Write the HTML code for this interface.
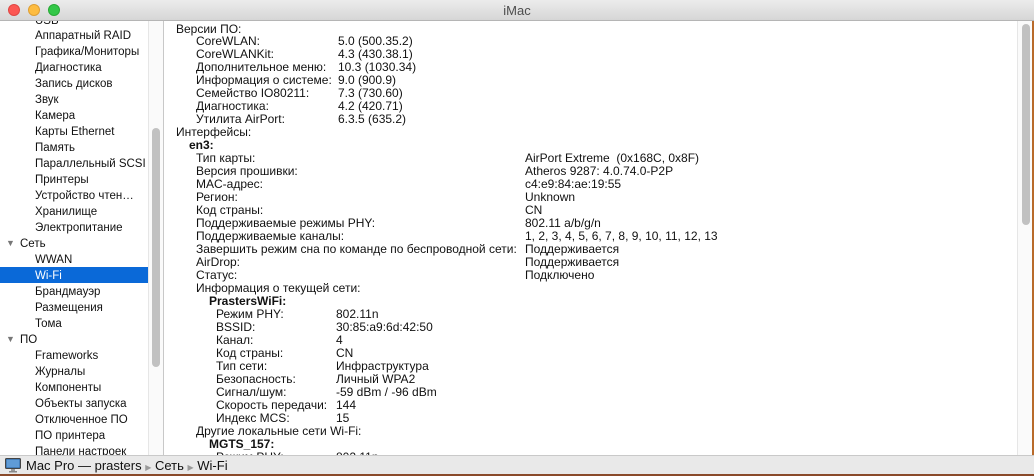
<!DOCTYPE html>
<html><head><meta charset="utf-8"><style>
*{margin:0;padding:0;box-sizing:border-box}
body{width:1034px;height:476px;overflow:hidden;background:#fff;font-family:"Liberation Sans","DejaVu Sans",sans-serif;font-size:12px;color:#111;position:relative}
.c{position:absolute;left:0;top:1px;width:1034px;height:454px;overflow:hidden}
.t{position:absolute;white-space:nowrap;line-height:13px}
.b{font-weight:bold}
#title{position:absolute;left:0;top:0;width:1034px;height:21px;background:linear-gradient(#ececec,#d6d6d6);border-bottom:1px solid #b5b5b5;z-index:2}
.dot{position:absolute;top:4px;width:12px;height:12px;border-radius:50%}
#side{position:absolute;left:0;top:21px;width:164px;height:434px;background:#fff;border-right:1px solid #c8c8c8;overflow:hidden}
.s{position:absolute;left:35px;white-space:nowrap;font-size:11.5px;line-height:16px;height:16px;top:1px}
.h{left:20px}
.tri{position:absolute;left:6px;font-size:9px;color:#777;line-height:16px}
#bot{position:absolute;left:0;top:455px;width:1034px;height:19px;background:#e9e9e9;border-top:1px solid #c9c9c9;z-index:2}
</style></head><body>
<div id="title">
<div class="dot" style="left:8px;background:#fc5753;border:1px solid #df4744"></div>
<div class="dot" style="left:28px;background:#fdbc40;border:1px solid #de9f34"></div>
<div class="dot" style="left:48px;background:#33c748;border:1px solid #27aa35"></div>
<div style="position:absolute;left:0;width:1034px;top:3px;text-align:center;font-size:13px;color:#4d4d4d">iMac</div>
</div>
<div id="side">
<div class="s" style="top:-8px">USB</div>
<div class="s" style="top:7px">Аппаратный RAID</div>
<div class="s" style="top:23px">Графика/Мониторы</div>
<div class="s" style="top:39px">Диагностика</div>
<div class="s" style="top:55px">Запись дисков</div>
<div class="s" style="top:71px">Звук</div>
<div class="s" style="top:87px">Камера</div>
<div class="s" style="top:103px">Карты Ethernet</div>
<div class="s" style="top:119px">Память</div>
<div class="s" style="top:135px">Параллельный SCSI</div>
<div class="s" style="top:151px">Принтеры</div>
<div class="s" style="top:167px">Устройство чтен…</div>
<div class="s" style="top:183px">Хранилище</div>
<div class="s" style="top:199px">Электропитание</div>
<div class="tri" style="top:214px">▼</div><div class="s h" style="top:215px">Сеть</div>
<div class="s" style="top:231px">WWAN</div>
<div style="position:absolute;left:0;top:246px;width:148px;height:16px;background:#0a69d8"></div>
<div class="s" style="top:247px;color:#fff">Wi-Fi</div>
<div class="s" style="top:263px">Брандмауэр</div>
<div class="s" style="top:279px">Размещения</div>
<div class="s" style="top:295px">Тома</div>
<div class="tri" style="top:310px">▼</div><div class="s h" style="top:311px">ПО</div>
<div class="s" style="top:327px">Frameworks</div>
<div class="s" style="top:343px">Журналы</div>
<div class="s" style="top:359px">Компоненты</div>
<div class="s" style="top:375px">Объекты запуска</div>
<div class="s" style="top:391px">Отключенное ПО</div>
<div class="s" style="top:407px">ПО принтера</div>
<div class="s" style="top:423px">Панели настроек</div>
<div style="position:absolute;left:148px;top:0;width:16px;height:434px;background:#fafafa;border-left:1px solid #e6e6e6"></div>
<div style="position:absolute;left:152px;top:107px;width:8px;height:239px;border-radius:4px;background:#c1c1c1"></div>
</div>
<div style="position:absolute;left:1017px;top:21px;width:15px;height:434px;background:#fafafa;border-left:1px solid #e6e6e6"></div>
<div style="position:absolute;left:1022px;top:24px;width:8px;height:201px;border-radius:4px;background:#c1c1c1"></div>
<div style="position:absolute;left:1032px;top:0;width:2px;height:476px;background:#b86a2a"></div>

<div class="c">
<div class="t" style="left:176px;top:22px">Версии ПО:</div>
<div class="t" style="left:196px;top:34px">CoreWLAN:</div><div class="t" style="left:338px;top:34px">5.0 (500.35.2)</div>
<div class="t" style="left:196px;top:47px">CoreWLANKit:</div><div class="t" style="left:338px;top:47px">4.3 (430.38.1)</div>
<div class="t" style="left:196px;top:60px">Дополнительное меню:</div><div class="t" style="left:338px;top:60px">10.3 (1030.34)</div>
<div class="t" style="left:196px;top:73px">Информация о системе:</div><div class="t" style="left:338px;top:73px">9.0 (900.9)</div>
<div class="t" style="left:196px;top:86px">Семейство IO80211:</div><div class="t" style="left:338px;top:86px">7.3 (730.60)</div>
<div class="t" style="left:196px;top:99px">Диагностика:</div><div class="t" style="left:338px;top:99px">4.2 (420.71)</div>
<div class="t" style="left:196px;top:112px">Утилита AirPort:</div><div class="t" style="left:338px;top:112px">6.3.5 (635.2)</div>
<div class="t" style="left:176px;top:125px">Интерфейсы:</div>
<div class="t b" style="left:189px;top:138px">en3:</div>
<div class="t" style="left:196px;top:151px">Тип карты:</div><div class="t" style="left:525px;top:151px">AirPort Extreme&nbsp; (0x168C, 0x8F)</div>
<div class="t" style="left:196px;top:164px">Версия прошивки:</div><div class="t" style="left:525px;top:164px">Atheros 9287: 4.0.74.0-P2P</div>
<div class="t" style="left:196px;top:177px">MAC-адрес:</div><div class="t" style="left:525px;top:177px">c4:e9:84:ae:19:55</div>
<div class="t" style="left:196px;top:190px">Регион:</div><div class="t" style="left:525px;top:190px">Unknown</div>
<div class="t" style="left:196px;top:203px">Код страны:</div><div class="t" style="left:525px;top:203px">CN</div>
<div class="t" style="left:196px;top:216px">Поддерживаемые режимы PHY:</div><div class="t" style="left:525px;top:216px">802.11 a/b/g/n</div>
<div class="t" style="left:196px;top:229px">Поддерживаемые каналы:</div><div class="t" style="left:525px;top:229px">1, 2, 3, 4, 5, 6, 7, 8, 9, 10, 11, 12, 13</div>
<div class="t" style="left:196px;top:242px">Завершить режим сна по команде по беспроводной сети:</div><div class="t" style="left:525px;top:242px">Поддерживается</div>
<div class="t" style="left:196px;top:255px">AirDrop:</div><div class="t" style="left:525px;top:255px">Поддерживается</div>
<div class="t" style="left:196px;top:268px">Статус:</div><div class="t" style="left:525px;top:268px">Подключено</div>
<div class="t" style="left:196px;top:281px">Информация о текущей сети:</div>
<div class="t b" style="left:209px;top:294px">PrastersWiFi:</div>
<div class="t" style="left:216px;top:307px">Режим PHY:</div><div class="t" style="left:336px;top:307px">802.11n</div>
<div class="t" style="left:216px;top:320px">BSSID:</div><div class="t" style="left:336px;top:320px">30:85:a9:6d:42:50</div>
<div class="t" style="left:216px;top:333px">Канал:</div><div class="t" style="left:336px;top:333px">4</div>
<div class="t" style="left:216px;top:346px">Код страны:</div><div class="t" style="left:336px;top:346px">CN</div>
<div class="t" style="left:216px;top:359px">Тип сети:</div><div class="t" style="left:336px;top:359px">Инфраструктура</div>
<div class="t" style="left:216px;top:372px">Безопасность:</div><div class="t" style="left:336px;top:372px">Личный WPA2</div>
<div class="t" style="left:216px;top:385px">Сигнал/шум:</div><div class="t" style="left:336px;top:385px">-59 dBm / -96 dBm</div>
<div class="t" style="left:216px;top:398px">Скорость передачи:</div><div class="t" style="left:336px;top:398px">144</div>
<div class="t" style="left:216px;top:411px">Индекс MCS:</div><div class="t" style="left:336px;top:411px">15</div>
<div class="t" style="left:196px;top:424px">Другие локальные сети Wi-Fi:</div>
<div class="t b" style="left:209px;top:437px">MGTS_157:</div>
<div class="t" style="left:216px;top:450px">Режим PHY:</div><div class="t" style="left:336px;top:450px">802.11n</div>
</div>

<div id="bot">
<svg style="position:absolute;left:5px;top:2px" width="16" height="15" viewBox="0 0 16 15"><rect x="0.5" y="0.5" width="15" height="10" rx="1" fill="#2a5f9a" stroke="#444"/><rect x="1.5" y="1.5" width="13" height="8" fill="#5f9bd6"/><rect x="6" y="11" width="4" height="2" fill="#999"/><rect x="4" y="13" width="8" height="1.5" fill="#888"/></svg>
<div style="position:absolute;left:26px;top:2px;font-size:13px;line-height:15px;color:#111;white-space:nowrap">Mac Pro — prasters <span style="color:#999;font-size:8px">▶</span> Сеть <span style="color:#999;font-size:8px">▶</span> Wi-Fi</div>
</div>
<div style="position:absolute;left:0;top:474px;width:1034px;height:2px;background:#8a4a2a"></div>
</body></html>
